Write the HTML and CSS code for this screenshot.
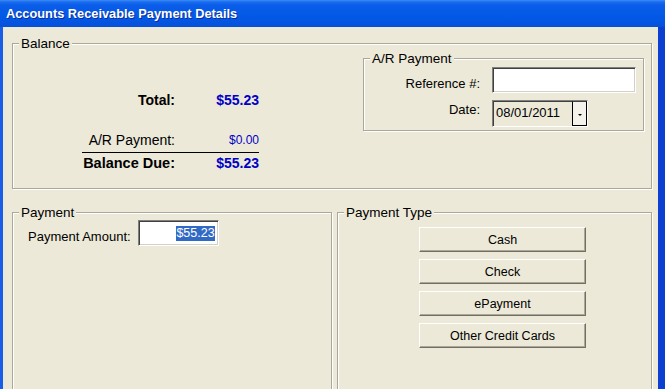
FILE: index.html
```html
<!DOCTYPE html>
<html lang="en">
<head>
    <meta charset="UTF-8">
    <meta name="viewport" content="width=device-width, initial-scale=1.0">
    <title>Accounts Receivable Payment Details</title>
    <link rel="stylesheet" href="styles.css">
</head>
<body>

    <div class="window">
        <div class="titlebar">Accounts Receivable Payment Details</div>

        <div class="client">
            <fieldset class="group balance">
                <legend>Balance</legend>
                <div class="balance-body">
                    <div class="totals">
                        <div class="row total"><span>Total:</span><span class="amt">$55.23</span></div>
                        <div class="row applied"><span>A/R Payment:</span><span class="amt">$0.00</span></div>
                        <div class="row due"><span>Balance Due:</span><span class="amt">$55.23</span></div>
                    </div>

                    <fieldset class="group ar">
                        <legend>A/R Payment</legend>
                        <div class="ar-form">
                            <label class="ref-label">Reference #:</label>
                            <div class="field"></div>
                            <label class="date-label">Date:</label>
                            <div class="combo">
                                <span class="combo-text">08/01/2011</span>
                                <span class="drop"><span class="arrow"></span></span>
                            </div>
                        </div>
                    </fieldset>
                </div>
            </fieldset>

            <div class="lower">
                <fieldset class="group payment">
                    <legend>Payment</legend>
                    <div class="amount-row">
                        <label>Payment Amount:</label>
                        <div class="field amount"><span class="sel">$55.23</span></div>
                    </div>
                </fieldset>

                <fieldset class="group ptype">
                    <legend>Payment Type</legend>
                    <div class="buttons">
                        <button>Cash</button>
                        <button>Check</button>
                        <button>ePayment</button>
                        <button>Other Credit Cards</button>
                    </div>
                </fieldset>
            </div>
        </div>
    </div>

</body>
</html>
```

FILE: styles.css
```css
html, body {
    margin: 0;
    padding: 0;
    overflow: hidden;
    background: #ECE9D8;
    font-family: "Liberation Sans", Arial, sans-serif;
    font-size: 13px;
    color: #000;
}
.window {
    width: 665px;
    height: 389px;
    display: flex;
    flex-direction: column;
}
.titlebar {
    height: 27px;
    flex: none;
    box-sizing: border-box;
    padding: 5px 0 0 6px;
    background: linear-gradient(to bottom, #3d8bf5 0, #1a6cf0 2px, #0a5de8 5px, #0258e6 18px, #0650d8 27px);
    color: #fff;
    font-weight: bold;
    font-size: 12.8px;
    line-height: 17px;
    text-shadow: 1px 1px 0 #0b2d9a;
}
.client {
    flex: 1;
    border-left: 3px solid #1a5ee8;
    border-right: 7px solid #0a3fd2;
    padding: 9px 6px 0 9px;
    background: #ECE9D8;
}

/* group boxes */
.group {
    margin: 0;
    padding: 0;
    border: 1px solid #ACA899;
    box-shadow: inset 1px 1px 0 #fff, 1px 1px 0 #fff;
    min-width: 0;
}
.group legend {
    margin-left: 6px;
    padding: 0 2px;
    font-size: 13.5px;
    line-height: 15px;
    background: #ECE9D8;
}

/* balance */
.balance {
    width: 638px;
    padding-bottom: 17px;
}
.balance-body {
    display: flex;
    align-items: flex-start;
}
.totals {
    margin: 41px 0 0 69px;
    width: 177px;
}
.row {
    display: grid;
    grid-template-columns: 93px 84px;
    line-height: 16px;
    text-align: right;
    font-size: 14px;
}
.row .amt {
    color: #0000c8;
}
.total, .due {
    font-weight: bold;
}
.applied {
    margin-top: 24px;
    padding-bottom: 4px;
    border-bottom: 1px solid #000;
}
.applied .amt {
    font-size: 12px;
}
.due {
    margin-top: 2px;
    font-size: 14.5px;
}
.due .amt {
    font-size: 14px;
}

/* A/R payment */
.ar {
    margin: 0 7px 0 auto;
    padding: 0 7px 4px 0;
}
.ar-form {
    margin-top: 1px;
    display: grid;
    grid-template-columns: 116px 144px;
    grid-auto-rows: 26px;
    column-gap: 12px;
    row-gap: 7px;
    align-items: center;
}
.ar-form label {
    text-align: right;
}
.ref-label {
    margin-top: 6px;
}
.date-label {
    margin-top: -8px;
}
.field {
    height: 26px;
    box-sizing: border-box;
    background: #fff;
    border: 1px solid;
    border-color: #808080 #fff #fff #808080;
    box-shadow: inset 1px 1px 0 #404040, inset -1px -1px 0 #D4D0C8;
}
.combo {
    width: 96px;
    height: 27px;
    box-sizing: border-box;
    display: flex;
    border: 1px solid;
    border-color: #808080 #fff #fff #808080;
    box-shadow: inset 1px 1px 0 #404040;
    background: #ECE9D8;
}
.combo-text {
    flex: 1;
    padding: 4px 0 0 3px;
    font-size: 13px;
    line-height: 16px;
}
.drop {
    width: 15px;
    box-sizing: border-box;
    border: 1px solid #000;
    border-top-color: #404040;
    background: #F4F2EA;
    display: flex;
    align-items: center;
    justify-content: center;
}
.arrow {
    width: 0;
    height: 0;
    border-left: 2px solid transparent;
    border-right: 2px solid transparent;
    border-top: 2px solid #000;
    margin-top: 3px;
}

/* lower groups */
.lower {
    display: flex;
    gap: 5px;
    margin-top: 16px;
}
.payment {
    width: 318px;
    height: 200px;
}
.amount-row {
    display: flex;
    align-items: center;
    gap: 7px;
    padding-left: 15px;
}
.amount-row label {
    margin-top: 7px;
}
.amount {
    width: 81px;
    display: flex;
    justify-content: flex-end;
    align-items: center;
    padding-right: 3px;
}
.sel {
    background: #316AC5;
    color: #fff;
    font-size: 12.5px;
    line-height: 15px;
}
.ptype {
    width: 313px;
    height: 200px;
}
.buttons {
    margin: 7px 0 0 81px;
    display: flex;
    flex-direction: column;
    gap: 7px;
}
button {
    width: 167px;
    height: 25px;
    margin: 0;
    padding: 0;
    background: #ECE9D8;
    border: 1px solid;
    border-color: #fff #716F64 #716F64 #fff;
    box-shadow: inset -1px -1px 0 #ACA899;
    font-family: "Liberation Sans", Arial, sans-serif;
    font-size: 12.5px;
    color: #000;
}
```
